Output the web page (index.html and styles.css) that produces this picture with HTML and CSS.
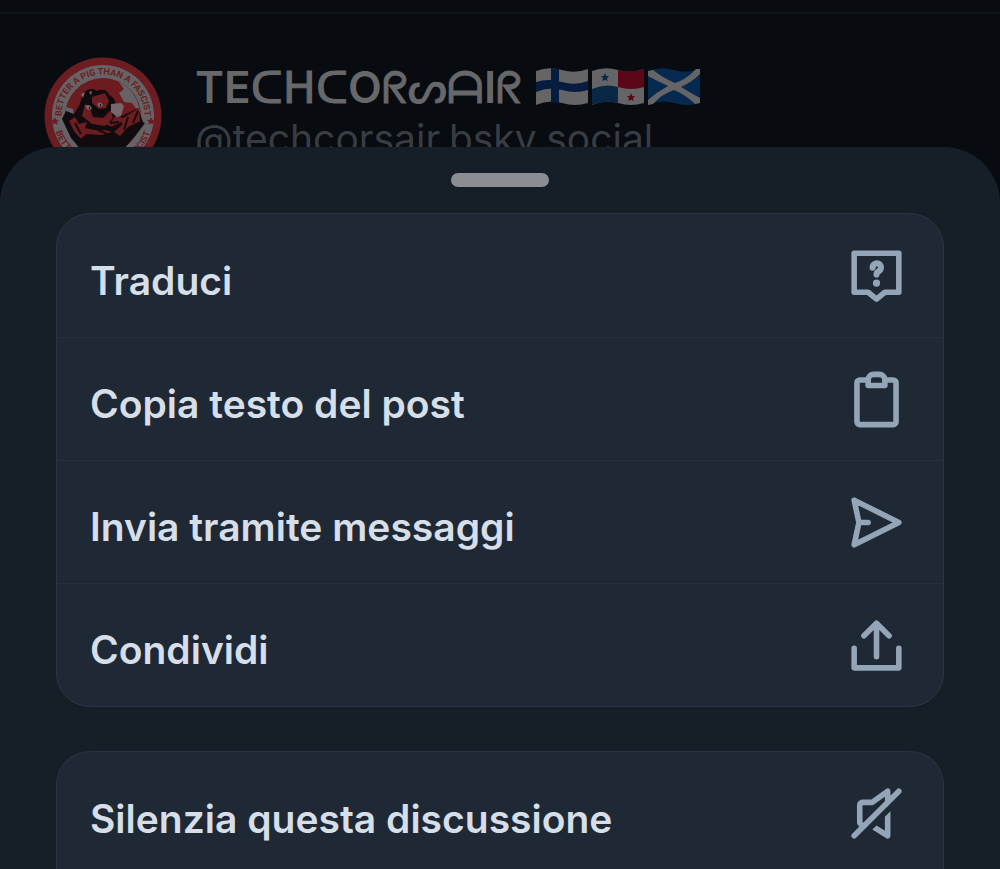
FILE: index.html
```html
<!DOCTYPE html>
<html lang="it">
<head>
<meta charset="utf-8">
<meta name="viewport" content="width=device-width, initial-scale=1">
<title>Opzioni del post</title>
<link rel="stylesheet" href="styles.css">
</head>
<body>
<main class="post">
  <header class="author">
    <svg class="avatar" viewBox="0 0 118 118" role="img" aria-label="Avatar">
      <defs>
        <path id="arc-top" d="M18.500 68 A41.500 41.500 0 1 1 99.500 68"/>
        <path id="arc-low" d="M10.500 70 A49.500 49.500 0 0 0 107.500 70"/>
      </defs>
      <circle cx="59" cy="59" r="58.500" fill="#6c1d21"/>
      <circle cx="59" cy="59" r="51" fill="#666367"/>
      <circle cx="59" cy="59" r="38" fill="#6c1b1e"/>
      <path d="M75 25 L80 32 L75 36 L80 45 L88 46 L96 57 A38 38 0 0 0 79 27Z M22 50 L29 52 L30 60 L22 67Z" fill="#666367"/>
      <path d="M39 36 Q47 29 53 34 Q62 30 65 38 Q74 42 70 52 L78 59 L94 51 L99 65 L101 66 L92 78 L72 101 L38 94 L27 81 L18 62 L22 54 L30 57 L36 47Z" fill="#100b0f"/>
      <path d="M48 40 L61 36 L65 44 L62 51 L55 52 L48 46Z M41 47 L46 51 L49 60 L59 61 L67 53 L69 61 L61 69 L48 67 L38 59Z M25 64 L31 60 L35 67 L43 65 L41 71 L50 73 L61 73 L68 75 L58 78 L42 77 L37 82 L30 74Z M61 67 L68 64 L72 58 L79 61 L95 51 L96 64 L84 70 L76 79 L70 75 L79 67 L69 70Z" fill="#6c1d20"/>
      <path d="M37 37 L41 35 L39 41Z M45 35 L48 34 L47 38Z M41 49 Q46 46 48 52 L44 53Z M53 47 Q57 43 59 49 L55 50Z M67 47 L77 46 L80 49 L77 59 L73 60 L67 55Z" fill="#77676a"/>
      <path d="M66 66 L75 65 M69 70 L78 66 M84 60 L80 73 M94 54 L89 66 M31 66 L37 77 M35 82 L54 87 M48 70 L65 78" fill="none" stroke="#170b0e" stroke-width="2"/>
      <path d="M45 51 h1 M56 48 h1 M54 54 l6 2" stroke="#09080c" stroke-width="2" fill="none"/>
      <path d="M11 60 l1.200 2.700 3 .3 -2.300 1.900 .8 2.900 -2.700-1.500 -2.700 1.500 .8-2.900 -2.300-1.900 3-.3Z M107 60 l1.200 2.700 3 .3 -2.300 1.900 .8 2.900 -2.700-1.500 -2.700 1.500 .8-2.900 -2.300-1.900 3-.3Z" fill="#6c1d21"/>
      <text class="badge-text"><textPath href="#arc-top" startOffset="50%" text-anchor="middle">BETTER A PIG THAN A FASCIST</textPath></text>
      <text class="badge-text"><textPath href="#arc-low" startOffset="5">BETTER</textPath></text>
      <text class="badge-text"><textPath href="#arc-low" startOffset="96%" text-anchor="end">FASCIST</textPath></text>
    </svg>
    <div class="identity">
      <div class="name">
        <span>TE<span class="syllabic">ᑕᕼᑕ</span>O<span class="syllabic">ᖇᔕᗩ</span>I<span class="syllabic">ᖇ</span></span>
        <span class="flags">
          <svg class="flag" viewBox="0 0 52 38" role="img" aria-label="Finlandia">
            <path d="M0 3 Q13-2 26 2 T52 1 V35 Q39 39 26 35 T0 37Z" fill="#656466"/>
            <path d="M15 0 Q19 0 23 1 V35 Q19 34 15 35Z M0 14 Q13 10 26 14 T52 13 V22 Q39 26 26 22 T0 24Z" fill="#071d40"/>
          </svg>
          <svg class="flag" viewBox="0 0 52 38" role="img" aria-label="Panama">
            <path d="M0 3 Q13-2 26 2 T52 1 V35 Q39 39 26 35 T0 37Z" fill="#656466"/>
            <path d="M26 2 Q39 5 52 1 V19 Q39 23 26 19Z" fill="#5b0718"/>
            <path d="M0 21 Q13 15 26 19 V35 Q13 31 0 37Z" fill="#082846"/>
            <path d="M13 5 l1.200 3 3 .2 -2.300 2 .8 3 -2.700-1.600 -2.700 1.600 .8-3 -2.300-2 3-.2Z" fill="#082846"/>
            <path d="M39 25 l1.200 3 3 .2 -2.300 2 .8 3 -2.700-1.600 -2.700 1.600 .8-3 -2.300-2 3-.2Z" fill="#5b0718"/>
          </svg>
          <svg class="flag" viewBox="0 0 52 38" role="img" aria-label="Scozia">
            <path d="M0 3 Q13-2 26 2 T52 1 V35 Q39 39 26 35 T0 37Z" fill="#06294f"/>
            <path d="M0 3 L5 2 Q15 10 27 15 Q39 11 48 1 L52 1 V6 Q44 14 33 19 Q43 25 52 30 V35 L47 36 Q38 27 26 22 Q14 26 5 36 L0 37 V32 Q9 24 20 18 Q9 13 0 8Z" fill="#656466"/>
          </svg>
        </span>
      </div>
      <div class="handle">@techcorsair.bsky.social</div>
    </div>
  </header>
</main>

<section class="sheet" role="dialog" aria-label="Opzioni del post">
  <div class="grip"></div>
  <div class="group">
    <button class="item" type="button">
      <span class="label">Traduci</span>
      <svg class="icon" viewBox="0 0 24 24" aria-hidden="true">
        <path d="M4 4h16v14h-5l-3 2.500L9 18H4Z"/>
        <path d="M10.600 9.200a1.500 1.500 0 1 1 2.300 1.200c-.6.4-.9.700-.9 1.200" stroke-width="2.200"/>
        <circle class="solid" cx="12" cy="14.700" r="1.300"/>
      </svg>
    </button>
    <button class="item" type="button">
      <span class="label">Copia testo del post</span>
      <svg class="icon" viewBox="0 0 24 24" aria-hidden="true">
        <path d="M9 5H6a1 1 0 0 0-1 1v14a1 1 0 0 0 1 1h12a1 1 0 0 0 1-1V6a1 1 0 0 0-1-1h-3"/>
        <path d="M9 7h6V5a2 2 0 0 0-2-2h-2a2 2 0 0 0-2 2Z"/>
      </svg>
    </button>
    <button class="item" type="button">
      <span class="label">Invia tramite messaggi</span>
      <svg class="icon" viewBox="0 0 24 24" aria-hidden="true">
        <path d="M4 4l16 8L4 20l1.700-8Z M5.700 12H9"/>
      </svg>
    </button>
    <button class="item" type="button">
      <span class="label">Condividi</span>
      <svg class="icon" viewBox="0 0 24 24" aria-hidden="true">
        <path d="M12 16V4 M7.500 8.500L12 4l4.500 4.500 M4 13v7h16v-7"/>
      </svg>
    </button>
  </div>
  <div class="group">
    <button class="item" type="button">
      <span class="label">Silenzia questa discussione</span>
      <svg class="icon" viewBox="0 0 24 24" aria-hidden="true">
        <path d="M4 20L20 4 M6.700 16.200L6 15.300V9a1 1 0 0 1 1-1h3.500L16 4v3.500"/>
        <path d="M17 11.200V20a1 1 0 0 1-1.500.9L10.500 17.700L12 16.300L15 18.200V13.200Z" class="solid"/>
      </svg>
    </button>
  </div>
</section>
</body>
</html>
```

FILE: styles.css
```css
* {
  box-sizing: border-box;
}

body {
  margin: 0;
  height: 100vh;
  overflow: hidden;
  background: #080b10;
  font-family: Inter, "DejaVu Sans", sans-serif;
}

.post {
  margin-top: 12px;
  border-top: 2px solid #10151b;
}

.author {
  display: flex;
  gap: 33px;
  padding: 43px 44px 0;
}

.avatar {
  flex: none;
  width: 118px;
  height: 118px;
}

.badge-text {
  fill: #6c1d21;
  font-family: Roboto, sans-serif;
  font-size: 9px;
  font-weight: 700;
}

.identity {
  min-width: 0;
  padding-top: 4px;
  white-space: nowrap;
}

.name {
  display: flex;
  align-items: center;
  gap: 14px;
  height: 52px;
  color: #66686a;
  font-size: 44px;
  font-weight: 600;
}

.syllabic {
  font-weight: 400;
  -webkit-text-stroke: 1px #66686a;
}

.flags {
  display: flex;
  gap: 4px;
}

.flag {
  width: 52px;
  height: 38px;
}

.handle {
  color: #383d44;
  font-size: 39px;
  line-height: 52px;
}

.sheet {
  position: absolute;
  inset: 147px 0 0;
  overflow: hidden;
  display: flex;
  flex-direction: column;
  gap: 44px;
  padding: 26px 56px 0;
  border-radius: 56px 56px 0 0;
  background: #161e27;
}

.grip {
  flex: none;
  align-self: center;
  width: 98px;
  height: 14px;
  margin-bottom: -18px;
  border-radius: 7px;
  background: #8a8e93;
}

.group {
  flex: none;
  overflow: hidden;
  border: 1px solid #2a3642;
  border-radius: 34px;
  background: #1e2935;
}

.group:last-child {
  flex: 1 0 auto;
  border-bottom: 0;
  border-radius: 34px 34px 0 0;
}

.item {
  display: flex;
  align-items: center;
  justify-content: space-between;
  width: 100%;
  height: 123px;
  padding: 0 33px;
  border: 0;
  background: none;
  color: #d6dee8;
  font: 600 39px/50px Inter, sans-serif;
  text-align: left;
}

.item + .item {
  border-top: 1px solid #24303b;
}

.label {
  padding-top: 10px;
}

.icon {
  flex: none;
  width: 67px;
  height: 67px;
  fill: none;
  stroke: #93a5b7;
  stroke-width: 2;
  stroke-linecap: round;
  stroke-linejoin: round;
}

.icon .solid {
  fill: #93a5b7;
  stroke: none;
}
```
